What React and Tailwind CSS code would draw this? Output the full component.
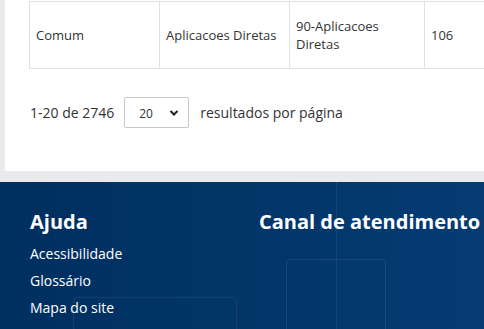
export default function App() {
  const font = { fontFamily: '"Open Sans", "Noto Sans", sans-serif' };
  return (
    <div className="w-[484px] h-[329px] overflow-hidden bg-[#e9eaee] relative" style={font}>
      <div className="ml-[5px] w-[600px] h-[171px] bg-white pt-[1px]">
        <div className="ml-[24px] flex border-t border-b border-[#dfe1e4] text-[13px] text-[#333] leading-[18px] h-[68px]">
          <div className="w-[130px] shrink-0 border-l border-[#dfe1e4] flex items-center pl-[6px]">Comum</div>
          <div className="w-[130px] shrink-0 border-l border-[#dfe1e4] flex items-center pl-[6px]">Aplicacoes Diretas</div>
          <div className="w-[135px] shrink-0 border-l border-[#dfe1e4] flex items-center pl-[6px]">90-Aplicacoes<br />Diretas</div>
          <div className="w-[200px] shrink-0 border-l border-[#dfe1e4] flex items-center pl-[6px]">106</div>
        </div>
        <div className="ml-[25px] mt-[28px] flex items-center text-[14px] text-[#333]">
          <span>1-20 de 2746</span>
          <div className="ml-[10px] w-[65px] h-[31px] border border-[#c8c8c8] rounded-[2px] flex items-center justify-between pl-[14px] pr-[9px]">
            <span className="text-[12px] mt-[3px]">20</span>
            <svg width="10" height="8" viewBox="0 0 10 8"><path d="M1.5 2 L5 5.5 L8.5 2" stroke="#222" strokeWidth="2" fill="none" /></svg>
          </div>
          <span className="ml-[11px]">resultados por página</span>
        </div>
      </div>
      <div className="absolute left-0 top-[182px] w-[484px] h-[147px] bg-gradient-to-r from-[#002f5f] to-[#053c72] overflow-hidden text-white">
        <div className="absolute left-[336px] top-0 w-px h-[147px] bg-[#ffffff12]" />
        <div className="absolute left-[286px] top-[77px] w-[100px] h-[100px] rounded-[5px] border border-[#ffffff14]" />
        <div className="absolute left-[73px] top-[115px] w-[164px] h-[60px] rounded-[4px] border border-[#ffffff12]" />
        <div className="relative flex">
          <div className="ml-[30px] w-[229px] shrink-0">
            <div className="mt-[27px] text-[20px] font-bold leading-[26px]">Ajuda</div>
            <div className="mt-[5px] text-[14px] leading-[27px]">
              <div>Acessibilidade</div>
              <div>Glossário</div>
              <div>Mapa do site</div>
            </div>
          </div>
          <div className="mt-[27px] text-[20px] font-bold leading-[26px] whitespace-nowrap">Canal de atendimento</div>
        </div>
      </div>
    </div>
  );
}
